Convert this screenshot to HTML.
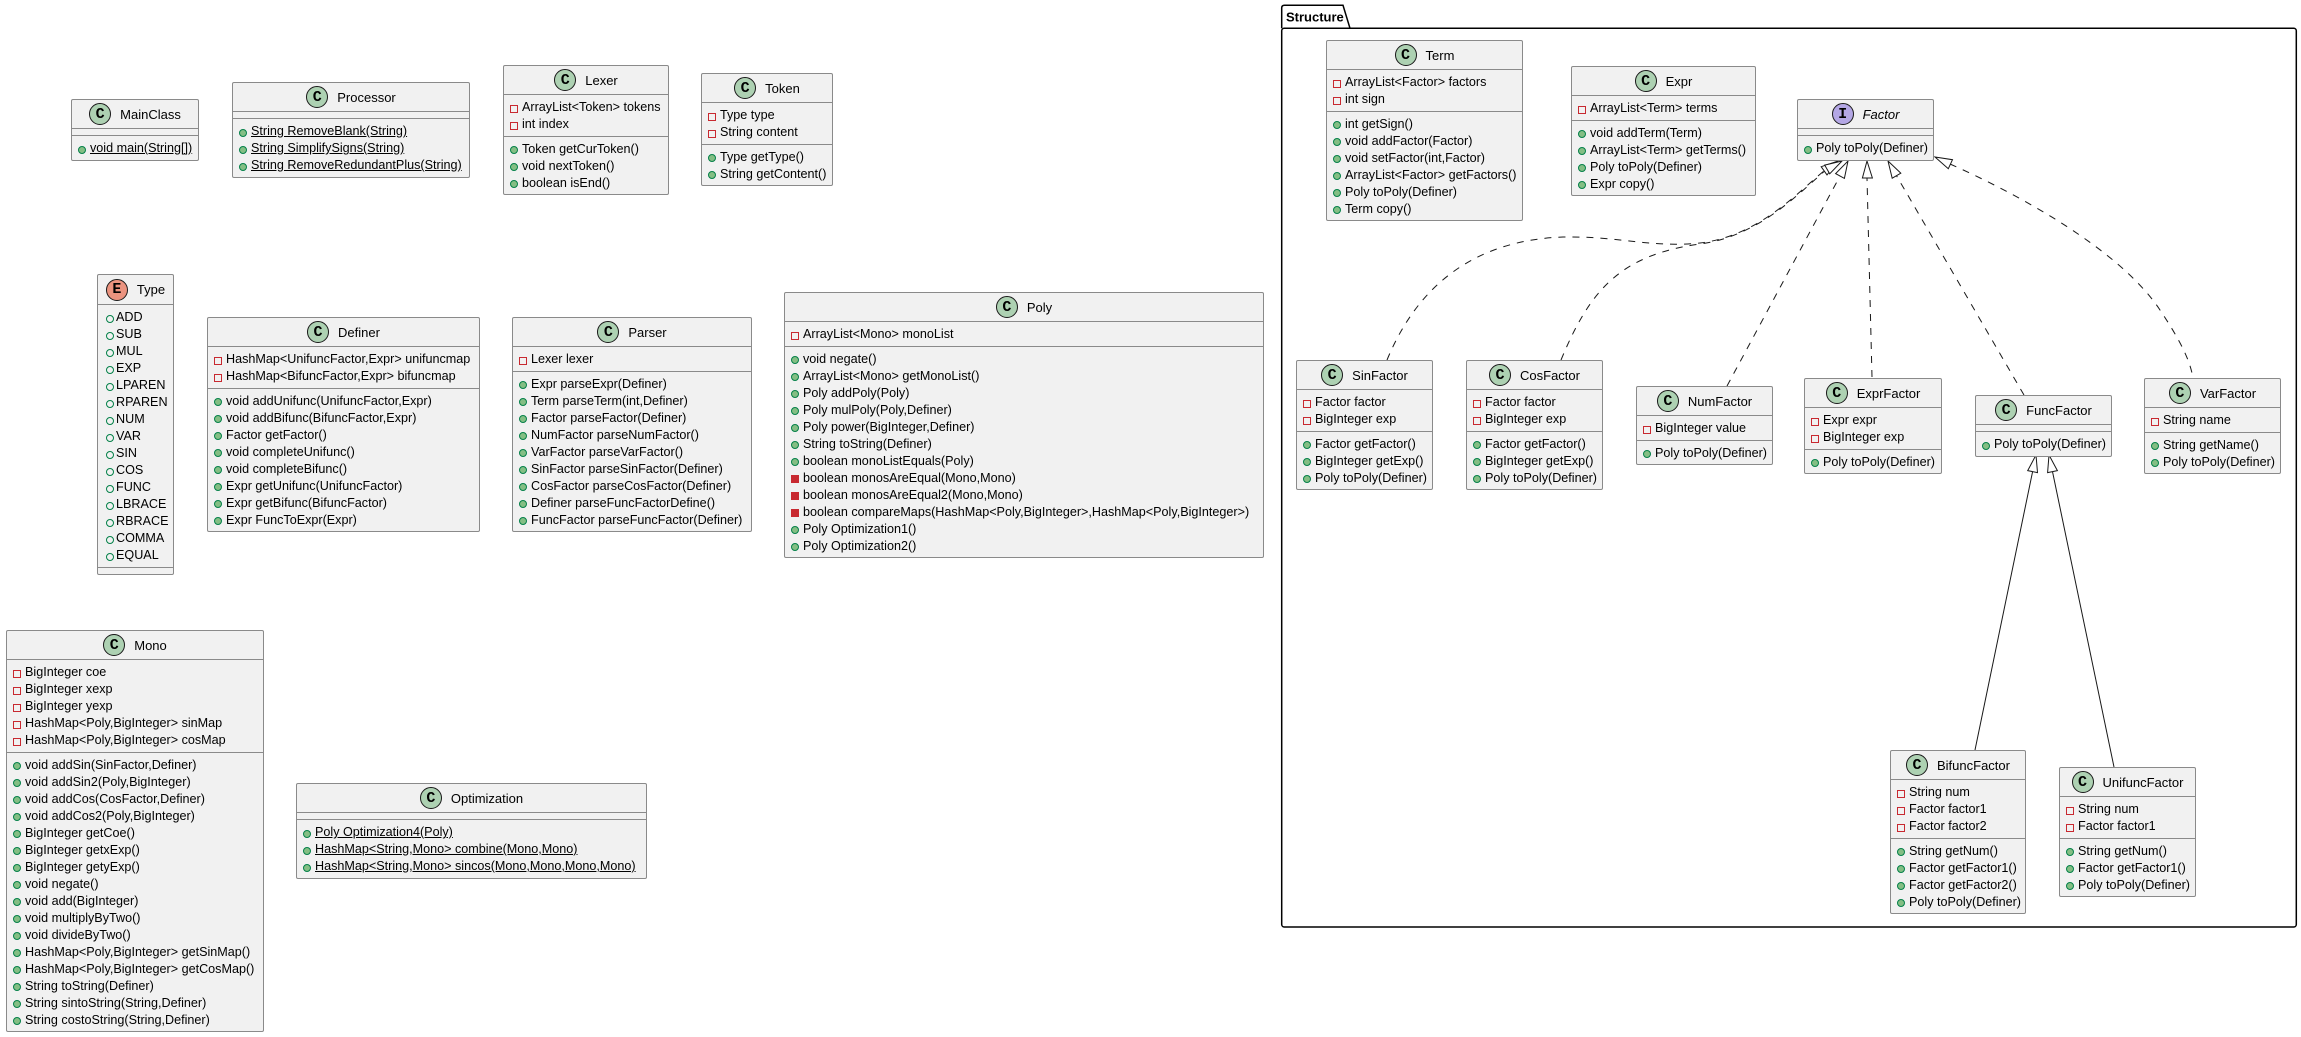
<!DOCTYPE html>
<html><head><meta charset="utf-8">
<style>
*{box-sizing:border-box;margin:0;padding:0}
html,body{width:2301px;height:1037px;background:#fff;overflow:hidden}
body{position:relative;font-family:"Liberation Sans",Arial,sans-serif;font-size:13px;color:#000}
.b{position:absolute;background:#F1F1F1;border:1px solid #8a8a8a;border-radius:2px;z-index:2}
.h{height:28px;display:flex;justify-content:center;align-items:center;gap:9px;white-space:nowrap}
.h.e{height:29px}
.ci{width:22px;height:22px;border-radius:50%;border:1px solid #181818;background:#ADD1B2;font-family:"Liberation Mono",monospace;font-weight:bold;font-size:15px;display:flex;align-items:center;justify-content:center;line-height:1}
.ci.E{background:#EB937F}
.ci.I{background:#B4A7E5}
.s{border-top:1px solid #8a8a8a;padding:4px 0 2.5px 0}
.s.z{height:7px;padding:0}
.r{position:relative;height:17px;line-height:17px;padding-left:18px;white-space:nowrap;font-size:12.6px}
.r::before{content:"";position:absolute;left:6px;top:5.5px;width:6px;height:6px}
.pf::before{border:1px solid #C82930;background:transparent}
.pm::before{border:1px solid #C82930;background:#C82930}
.pu::before{border:1px solid #038048;background:#84BE84;border-radius:50%}
.en::before{border:1px solid #038048;background:transparent;border-radius:50%;left:8px}
.u{text-decoration:underline}
.it{font-style:italic}
svg{position:absolute;left:0;top:0;z-index:1}
</style></head><body>
<svg width="2301" height="1037" viewBox="0 0 2301 1037">
<g fill="none" stroke="#000" stroke-width="1.5">
<path d="M1281.7,28.3 L1281.7,8 Q1281.7,5.3 1284.5,5.3 L1343,5.3 L1350,28.3"/>
<rect x="1281.7" y="28.3" width="1014.6" height="898.7" rx="2.5"/>
</g>
<text x="1286" y="21.7" font-family="Liberation Sans, Arial, sans-serif" font-weight="bold" font-size="13">Structure</text>
<g fill="none" stroke="#181818" stroke-width="1" stroke-dasharray="7,7">
<path d="M1387,360 C1420,280 1480,240 1563,237 C1620,236 1650,248 1700,243 C1760,236 1800,190 1824,171"/>
<path d="M1561,360 C1590,290 1620,255 1700,244 C1760,236 1800,192 1827,169"/>
<path d="M1727,386 L1840,176"/>
<path d="M1872,377 L1867,178"/>
<path d="M2024,395 L1896.5,175.7"/>
<path d="M1950,164 C2020,195 2120,250 2160,310 C2180,340 2190,360 2193,378"/>
</g>
<g fill="none" stroke="#181818" stroke-width="1">
<path d="M1975,750 L2032.6,471.6"/>
<path d="M2114,767 L2052.5,471.6"/>
</g>
<g fill="#fff" stroke="#181818" stroke-width="1">
<polygon points="1838,161 1827,174.9 1821.2,166.7"/>
<polygon points="1842,161 1829.7,173.8 1824.7,165.1"/>
<polygon points="1848,161 1844.4,178.4 1835.6,173.6"/>
<polygon points="1867,161 1862.4,178 1872.4,178"/>
<polygon points="1888,161 1900.8,173.2 1892.2,178.2"/>
<polygon points="1935,157 1952.5,159.7 1948.3,168.7"/>
<polygon points="2036,455 2037.5,472.6 2027.7,470.6"/>
<polygon points="2049,455 2057.4,470.6 2047.6,472.6"/>
</g>
</svg>

<div class="b" style="left:71px;top:99px;width:128px"><div class="h"><div class="ci">C</div><span>MainClass</span></div><div class="s z"></div><div class="s"><div class="r pu"><span class="u">void main(String[])</span></div></div></div>

<div class="b" style="left:232px;top:82px;width:238px"><div class="h"><div class="ci">C</div><span>Processor</span></div><div class="s z"></div><div class="s"><div class="r pu"><span class="u">String RemoveBlank(String)</span></div><div class="r pu"><span class="u">String SimplifySigns(String)</span></div><div class="r pu"><span class="u">String RemoveRedundantPlus(String)</span></div></div></div>

<div class="b" style="left:503px;top:65px;width:166px"><div class="h"><div class="ci">C</div><span>Lexer</span></div><div class="s"><div class="r pf">ArrayList&lt;Token&gt; tokens</div><div class="r pf">int index</div></div><div class="s"><div class="r pu">Token getCurToken()</div><div class="r pu">void nextToken()</div><div class="r pu">boolean isEnd()</div></div></div>

<div class="b" style="left:701px;top:73px;width:132px"><div class="h"><div class="ci">C</div><span>Token</span></div><div class="s"><div class="r pf">Type type</div><div class="r pf">String content</div></div><div class="s"><div class="r pu">Type getType()</div><div class="r pu">String getContent()</div></div></div>

<div class="b" style="left:97px;top:274px;width:77px"><div class="h e"><div class="ci E">E</div><span>Type</span></div><div class="s"><div class="r en">ADD</div><div class="r en">SUB</div><div class="r en">MUL</div><div class="r en">EXP</div><div class="r en">LPAREN</div><div class="r en">RPAREN</div><div class="r en">NUM</div><div class="r en">VAR</div><div class="r en">SIN</div><div class="r en">COS</div><div class="r en">FUNC</div><div class="r en">LBRACE</div><div class="r en">RBRACE</div><div class="r en">COMMA</div><div class="r en">EQUAL</div></div><div class="s z"></div></div>

<div class="b" style="left:207px;top:317px;width:273px"><div class="h"><div class="ci">C</div><span>Definer</span></div><div class="s"><div class="r pf">HashMap&lt;UnifuncFactor,Expr&gt; unifuncmap</div><div class="r pf">HashMap&lt;BifuncFactor,Expr&gt; bifuncmap</div></div><div class="s"><div class="r pu">void addUnifunc(UnifuncFactor,Expr)</div><div class="r pu">void addBifunc(BifuncFactor,Expr)</div><div class="r pu">Factor getFactor()</div><div class="r pu">void completeUnifunc()</div><div class="r pu">void completeBifunc()</div><div class="r pu">Expr getUnifunc(UnifuncFactor)</div><div class="r pu">Expr getBifunc(BifuncFactor)</div><div class="r pu">Expr FuncToExpr(Expr)</div></div></div>

<div class="b" style="left:512px;top:317px;width:240px"><div class="h"><div class="ci">C</div><span>Parser</span></div><div class="s"><div class="r pf">Lexer lexer</div></div><div class="s"><div class="r pu">Expr parseExpr(Definer)</div><div class="r pu">Term parseTerm(int,Definer)</div><div class="r pu">Factor parseFactor(Definer)</div><div class="r pu">NumFactor parseNumFactor()</div><div class="r pu">VarFactor parseVarFactor()</div><div class="r pu">SinFactor parseSinFactor(Definer)</div><div class="r pu">CosFactor parseCosFactor(Definer)</div><div class="r pu">Definer parseFuncFactorDefine()</div><div class="r pu">FuncFactor parseFuncFactor(Definer)</div></div></div>

<div class="b" style="left:784px;top:292px;width:480px"><div class="h"><div class="ci">C</div><span>Poly</span></div><div class="s"><div class="r pf">ArrayList&lt;Mono&gt; monoList</div></div><div class="s"><div class="r pu">void negate()</div><div class="r pu">ArrayList&lt;Mono&gt; getMonoList()</div><div class="r pu">Poly addPoly(Poly)</div><div class="r pu">Poly mulPoly(Poly,Definer)</div><div class="r pu">Poly power(BigInteger,Definer)</div><div class="r pu">String toString(Definer)</div><div class="r pu">boolean monoListEquals(Poly)</div><div class="r pm">boolean monosAreEqual(Mono,Mono)</div><div class="r pm">boolean monosAreEqual2(Mono,Mono)</div><div class="r pm">boolean compareMaps(HashMap&lt;Poly,BigInteger&gt;,HashMap&lt;Poly,BigInteger&gt;)</div><div class="r pu">Poly Optimization1()</div><div class="r pu">Poly Optimization2()</div></div></div>

<div class="b" style="left:6px;top:630px;width:258px"><div class="h"><div class="ci">C</div><span>Mono</span></div><div class="s"><div class="r pf">BigInteger coe</div><div class="r pf">BigInteger xexp</div><div class="r pf">BigInteger yexp</div><div class="r pf">HashMap&lt;Poly,BigInteger&gt; sinMap</div><div class="r pf">HashMap&lt;Poly,BigInteger&gt; cosMap</div></div><div class="s"><div class="r pu">void addSin(SinFactor,Definer)</div><div class="r pu">void addSin2(Poly,BigInteger)</div><div class="r pu">void addCos(CosFactor,Definer)</div><div class="r pu">void addCos2(Poly,BigInteger)</div><div class="r pu">BigInteger getCoe()</div><div class="r pu">BigInteger getxExp()</div><div class="r pu">BigInteger getyExp()</div><div class="r pu">void negate()</div><div class="r pu">void add(BigInteger)</div><div class="r pu">void multiplyByTwo()</div><div class="r pu">void divideByTwo()</div><div class="r pu">HashMap&lt;Poly,BigInteger&gt; getSinMap()</div><div class="r pu">HashMap&lt;Poly,BigInteger&gt; getCosMap()</div><div class="r pu">String toString(Definer)</div><div class="r pu">String sintoString(String,Definer)</div><div class="r pu">String costoString(String,Definer)</div></div></div>

<div class="b" style="left:296px;top:783px;width:351px"><div class="h"><div class="ci">C</div><span>Optimization</span></div><div class="s z"></div><div class="s"><div class="r pu"><span class="u">Poly Optimization4(Poly)</span></div><div class="r pu"><span class="u">HashMap&lt;String,Mono&gt; combine(Mono,Mono)</span></div><div class="r pu"><span class="u">HashMap&lt;String,Mono&gt; sincos(Mono,Mono,Mono,Mono)</span></div></div></div>

<div class="b" style="left:1326px;top:40px;width:197px"><div class="h"><div class="ci">C</div><span>Term</span></div><div class="s"><div class="r pf">ArrayList&lt;Factor&gt; factors</div><div class="r pf">int sign</div></div><div class="s"><div class="r pu">int getSign()</div><div class="r pu">void addFactor(Factor)</div><div class="r pu">void setFactor(int,Factor)</div><div class="r pu">ArrayList&lt;Factor&gt; getFactors()</div><div class="r pu">Poly toPoly(Definer)</div><div class="r pu">Term copy()</div></div></div>

<div class="b" style="left:1571px;top:66px;width:185px"><div class="h"><div class="ci">C</div><span>Expr</span></div><div class="s"><div class="r pf">ArrayList&lt;Term&gt; terms</div></div><div class="s"><div class="r pu">void addTerm(Term)</div><div class="r pu">ArrayList&lt;Term&gt; getTerms()</div><div class="r pu">Poly toPoly(Definer)</div><div class="r pu">Expr copy()</div></div></div>

<div class="b" style="left:1797px;top:99px;width:137px"><div class="h"><div class="ci I">I</div><span class="it">Factor</span></div><div class="s z"></div><div class="s"><div class="r pu">Poly toPoly(Definer)</div></div></div>

<div class="b" style="left:1296px;top:360px;width:137px"><div class="h"><div class="ci">C</div><span>SinFactor</span></div><div class="s"><div class="r pf">Factor factor</div><div class="r pf">BigInteger exp</div></div><div class="s"><div class="r pu">Factor getFactor()</div><div class="r pu">BigInteger getExp()</div><div class="r pu">Poly toPoly(Definer)</div></div></div>

<div class="b" style="left:1466px;top:360px;width:137px"><div class="h"><div class="ci">C</div><span>CosFactor</span></div><div class="s"><div class="r pf">Factor factor</div><div class="r pf">BigInteger exp</div></div><div class="s"><div class="r pu">Factor getFactor()</div><div class="r pu">BigInteger getExp()</div><div class="r pu">Poly toPoly(Definer)</div></div></div>

<div class="b" style="left:1636px;top:386px;width:137px"><div class="h"><div class="ci">C</div><span>NumFactor</span></div><div class="s"><div class="r pf">BigInteger value</div></div><div class="s"><div class="r pu">Poly toPoly(Definer)</div></div></div>

<div class="b" style="left:1804px;top:378px;width:138px"><div class="h"><div class="ci">C</div><span>ExprFactor</span></div><div class="s"><div class="r pf">Expr expr</div><div class="r pf">BigInteger exp</div></div><div class="s"><div class="r pu">Poly toPoly(Definer)</div></div></div>

<div class="b" style="left:1975px;top:395px;width:137px"><div class="h"><div class="ci">C</div><span>FuncFactor</span></div><div class="s z"></div><div class="s"><div class="r pu">Poly toPoly(Definer)</div></div></div>

<div class="b" style="left:2144px;top:378px;width:137px"><div class="h"><div class="ci">C</div><span>VarFactor</span></div><div class="s"><div class="r pf">String name</div></div><div class="s"><div class="r pu">String getName()</div><div class="r pu">Poly toPoly(Definer)</div></div></div>

<div class="b" style="left:1890px;top:750px;width:136px"><div class="h"><div class="ci">C</div><span>BifuncFactor</span></div><div class="s"><div class="r pf">String num</div><div class="r pf">Factor factor1</div><div class="r pf">Factor factor2</div></div><div class="s"><div class="r pu">String getNum()</div><div class="r pu">Factor getFactor1()</div><div class="r pu">Factor getFactor2()</div><div class="r pu">Poly toPoly(Definer)</div></div></div>

<div class="b" style="left:2059px;top:767px;width:137px"><div class="h"><div class="ci">C</div><span>UnifuncFactor</span></div><div class="s"><div class="r pf">String num</div><div class="r pf">Factor factor1</div></div><div class="s"><div class="r pu">String getNum()</div><div class="r pu">Factor getFactor1()</div><div class="r pu">Poly toPoly(Definer)</div></div></div>

</body></html>
